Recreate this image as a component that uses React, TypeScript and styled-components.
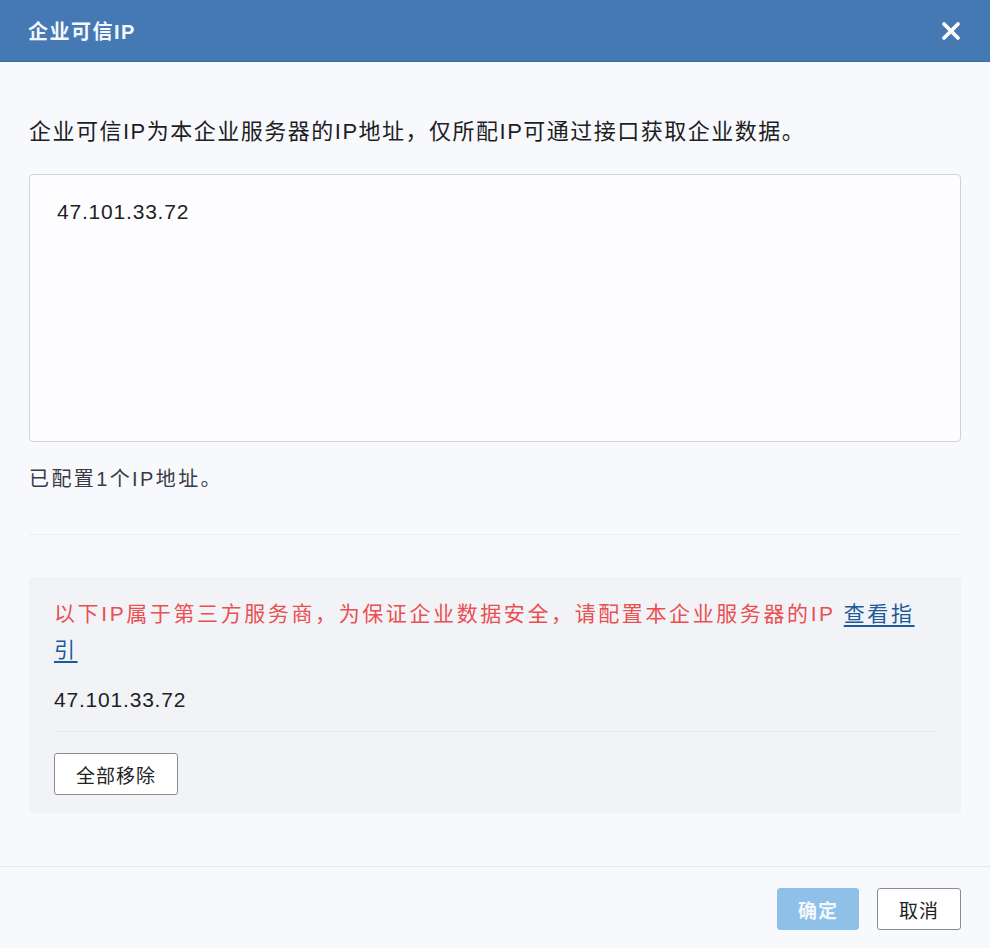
import * as React from "react"
import styled, { createGlobalStyle } from "styled-components"
import { X } from "lucide-react"

const GlobalStyle = createGlobalStyle`
  html, body {
    margin: 0;
    padding: 0;
    background: #f8f9fc;
  }
  body {
    font-family: "Liberation Sans", "Noto Sans CJK SC", sans-serif;
    color: #222;
  }
`

const Dialog = styled.div`
  width: 990px;
  height: 948px;
  display: flex;
  flex-direction: column;
  background: #f8f9fc;
  box-sizing: border-box;
`

const Header = styled.div`
  height: 62px;
  flex-shrink: 0;
  background: #4479b4;
  border-bottom: 1px solid #3c6ea6;
  box-sizing: border-box;
  display: flex;
  align-items: center;
  justify-content: space-between;
  padding: 0 24px 0 28px;
`

const Title = styled.h1`
  margin: 0;
  font-size: 20px;
  font-weight: bold;
  color: #f4f7fb;
  letter-spacing: 1.5px;
`

const CloseButton = styled.button`
  border: none;
  background: transparent;
  padding: 0;
  width: 30px;
  height: 30px;
  display: flex;
  align-items: center;
  justify-content: center;
  color: #fff;
  cursor: pointer;
`

const Body = styled.div`
  flex: 1;
  padding: 55px 29px 0 29px;
  display: flex;
  flex-direction: column;
`

const Desc = styled.p`
  margin: 0;
  font-size: 22px;
  line-height: 30px;
  letter-spacing: 1.5px;
  color: #1e1e24;
`

const IpBox = styled.div`
  margin-top: 27px;
  height: 268px;
  box-sizing: border-box;
  background: #fdfdff;
  border: 1px solid #cfd2d8;
  border-radius: 4px;
  padding: 24px 27px;
  font-size: 21px;
  line-height: 26px;
  letter-spacing: 0.8px;
  color: #222;
`

const Count = styled.div`
  margin-top: 22px;
  font-size: 20px;
  line-height: 30px;
  letter-spacing: 2.4px;
  color: #3a3a44;
`

const Divider = styled.div<{ $inset?: boolean }>`
  height: 1px;
  background: ${p => (p.$inset ? "#e7e9ee" : "#eceef2")};
`

const WarnPanel = styled.div`
  background: #f1f3f7;
  border-radius: 4px;
  padding: 19px 25px 19px 25px;
  display: flex;
  flex-direction: column;
`

const WarnText = styled.p`
  margin: 0;
  font-size: 21px;
  line-height: 36px;
  letter-spacing: 2.6px;
  color: #ea4f52;
`

const GuideLink = styled.a`
  color: #1d5a98;
  text-decoration: underline;
  text-underline-offset: 4px;
  cursor: pointer;
`

const ThirdIp = styled.div`
  margin-top: 17px;
  margin-bottom: 16px;
  font-size: 21px;
  line-height: 30px;
  letter-spacing: 0.8px;
  color: #1e1e24;
`

const Button = styled.button<{ $primary?: boolean; $w: number }>`
  height: 42px;
  width: ${p => p.$w}px;
  box-sizing: border-box;
  border-radius: 3px;
  font-family: "Liberation Sans", "Noto Sans CJK SC", sans-serif;
  font-size: 19px;
  letter-spacing: 1px;
  cursor: pointer;
  border: 1px solid ${p => (p.$primary ? "#8ec0e8" : "#8a8c92")};
  background: ${p => (p.$primary ? "#8ec0e8" : "#fff")};
  color: ${p => (p.$primary ? "#f2f8fd" : "#222")};
  font-weight: ${p => (p.$primary ? "bold" : "normal")};
`

const RemoveRow = styled.div`
  margin-top: 21px;
  display: flex;
`

const Footer = styled.div`
  flex-shrink: 0;
  border-top: 1px solid #e4e6ea;
  padding: 21px 29px 18px 0;
  display: flex;
  justify-content: flex-end;
  gap: 18px;
`

export default function App() {
  return (
    <>
      <GlobalStyle />
      <Dialog>
        <Header>
          <Title>企业可信IP</Title>
          <CloseButton aria-label="关闭">
            <X size={28} strokeWidth={3.2} />
          </CloseButton>
        </Header>
        <Body>
          <Desc>企业可信IP为本企业服务器的IP地址，仅所配IP可通过接口获取企业数据。</Desc>
          <IpBox>47.101.33.72</IpBox>
          <Count>已配置1个IP地址。</Count>
          <Divider style={{ marginTop: 40 }} />
          <WarnPanel style={{ marginTop: 42 }}>
            <WarnText>
              以下IP属于第三方服务商，为保证企业数据安全，请配置本企业服务器的IP{" "}
              <GuideLink>查看指引</GuideLink>
            </WarnText>
            <ThirdIp>47.101.33.72</ThirdIp>
            <Divider $inset />
            <RemoveRow>
              <Button $w={124}>全部移除</Button>
            </RemoveRow>
          </WarnPanel>
        </Body>
        <Footer>
          <Button $primary $w={82}>确定</Button>
          <Button $w={84}>取消</Button>
        </Footer>
      </Dialog>
    </>
  )
}
